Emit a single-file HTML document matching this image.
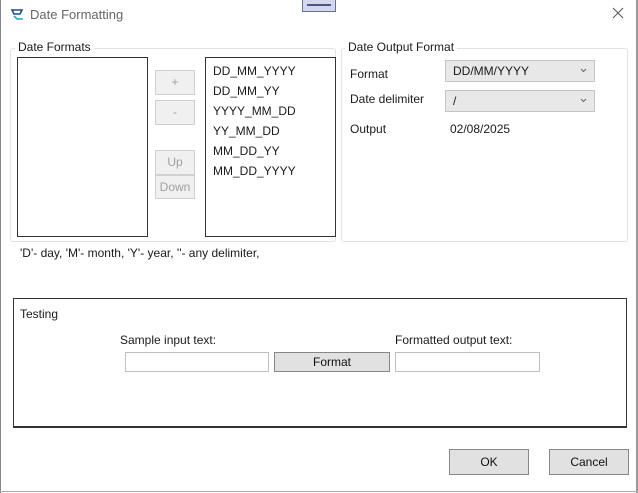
<!DOCTYPE html>
<html><head><meta charset="utf-8"><style>
*{box-sizing:border-box;margin:0;padding:0}
body{width:638px;height:493px;background:#fff;position:relative;overflow:hidden;font-family:"Liberation Sans",sans-serif;font-size:12px;color:#1a1a1a}
.a{position:absolute}
.grp{position:absolute;border:1px solid #dfe3e8;border-radius:3px}
.lg{position:absolute;background:#fff;padding:0 3px;font-size:12px;color:#1a1a1a}
.list{position:absolute;border:1px solid #333;background:#fff}
.btn{position:absolute;border:1px solid #d0d0d0;background:#f0f0f0;color:#a0a0a0;text-align:center;font-size:12px}
.bt2{position:absolute;border:1px solid #888;background:#e1e1e1;text-align:center;color:#111}
.combo{position:absolute;border:1px solid #c4c4c4;background:#e8e8e8;padding-left:7px;line-height:20px}
.tb{position:absolute;border:1px solid #bfbfbf;background:#fff}
</style></head><body>
<div class="a" style="left:0;top:0;width:1px;height:493px;background:#888"></div>
<div class="a" style="left:636px;top:0;width:2px;height:493px;background:#999"></div>
<div class="a" style="left:0;top:491px;width:638px;height:1px;background:#aaa"></div>
<svg class="a" style="left:10px;top:8px" width="15" height="13" viewBox="0 0 15 13"><path d="M2 2h10l-2 4H4z" fill="none" stroke="#1b4f8a" stroke-width="1.6"/><path d="M4 8l3 3h6" fill="none" stroke="#2a9fd6" stroke-width="1.6"/></svg>
<div class="a" style="left:30px;top:7px;font-size:13px;color:#666">Date Formatting</div>
<div class="a" style="left:302px;top:0;width:34px;height:12px;background:#d4d8ee;border:1px solid #6a6f9a;border-top:none"><div style="margin:4px 4px 0;height:2px;border-top:1px solid #505680;border-bottom:1px solid #505680"></div></div>
<svg class="a" style="left:612px;top:7px" width="12" height="12" viewBox="0 0 12 12"><path d="M1 1L11 11M11 1L1 11" stroke="#555" stroke-width="1"/></svg>

<div class="grp" style="left:10px;top:48px;width:326px;height:194px"></div>
<div class="lg" style="left:15px;top:40px">Date Formats</div>
<div class="list" style="left:17px;top:57px;width:131px;height:180px"></div>
<div class="btn" style="left:155px;top:70px;width:40px;height:25px;line-height:23px">+</div>
<div class="btn" style="left:155px;top:100px;width:40px;height:25px;line-height:23px">-</div>
<div class="btn" style="left:155px;top:150px;width:40px;height:25px;line-height:23px">Up</div>
<div class="btn" style="left:155px;top:175px;width:40px;height:24px;line-height:22px">Down</div>
<div class="list" style="left:205px;top:57px;width:131px;height:180px;padding:3px 0 0 7px;line-height:20px">DD_MM_YYYY<br>DD_MM_YY<br>YYYY_MM_DD<br>YY_MM_DD<br>MM_DD_YY<br>MM_DD_YYYY</div>

<div class="grp" style="left:341px;top:48px;width:287px;height:194px"></div>
<div class="lg" style="left:345px;top:40px">Date Output Format</div>
<div class="a" style="left:350px;top:67px">Format</div>
<div class="combo" style="left:445px;top:60px;width:150px;height:22px">DD/MM/YYYY</div>
<svg class="a" style="left:580px;top:68px" width="7" height="5" viewBox="0 0 7 5"><path d="M1 1l2.5 2.5L6 1" fill="none" stroke="#666"/></svg>
<div class="a" style="left:350px;top:92px">Date delimiter</div>
<div class="combo" style="left:445px;top:90px;width:150px;height:22px">/</div>
<svg class="a" style="left:580px;top:98px" width="7" height="5" viewBox="0 0 7 5"><path d="M1 1l2.5 2.5L6 1" fill="none" stroke="#666"/></svg>
<div class="a" style="left:350px;top:122px">Output</div>
<div class="a" style="left:450px;top:122px">02/08/2025</div>

<div class="a" style="left:20px;top:246px">'D'- day, 'M'- month, 'Y'- year, ''- any delimiter,</div>

<div class="a" style="left:13px;top:298px;width:614px;height:130px;border:1px solid #333;border-bottom:2px solid #333"></div>
<div class="a" style="left:20px;top:307px">Testing</div>
<div class="a" style="left:120px;top:333px">Sample input text:</div>
<div class="a" style="left:395px;top:333px">Formatted output text:</div>
<div class="tb" style="left:125px;top:352px;width:144px;height:20px"></div>
<div class="bt2" style="left:274px;top:352px;width:116px;height:20px;line-height:18px">Format</div>
<div class="tb" style="left:395px;top:352px;width:145px;height:20px"></div>

<div class="bt2" style="left:449px;top:449px;width:80px;height:26px;line-height:24px">OK</div>
<div class="bt2" style="left:549px;top:449px;width:80px;height:26px;line-height:24px">Cancel</div>
</body></html>
